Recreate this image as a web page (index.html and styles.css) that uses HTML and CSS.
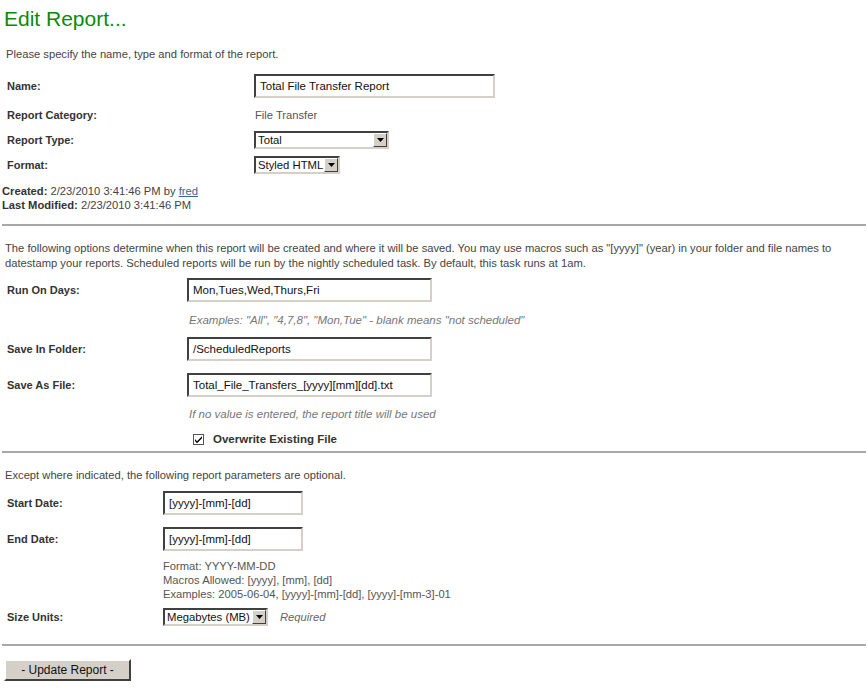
FILE: index.html
```html
<!DOCTYPE html>
<html>
<head>
<meta charset="utf-8">
<title>Edit Report</title>
<link rel="stylesheet" href="styles.css">
</head>
<body>
<div class="page">
  <h1 class="title">Edit Report...</h1>
  <p class="intro">Please specify the name, type and format of the report.</p>

  <div class="form form-a">
    <div class="label">Name:</div>
    <div class="ctl"><span class="input w-name">Total File Transfer Report</span></div>
    <div class="label">Report Category:</div>
    <div class="ctl"><span class="plain">File Transfer</span></div>
    <div class="label">Report Type:</div>
    <div class="ctl"><span class="select w-type"><span class="sel-text">Total</span><span class="sel-btn"><svg width="7" height="4" viewBox="0 0 7 4"><path d="M0 0h7L3.5 4z" fill="#000"/></svg></span></span></div>
    <div class="label">Format:</div>
    <div class="ctl"><span class="select w-format"><span class="sel-text">Styled HTML</span><span class="sel-btn"><svg width="7" height="4" viewBox="0 0 7 4"><path d="M0 0h7L3.5 4z" fill="#000"/></svg></span></span></div>
  </div>

  <div class="meta">
    <div><b>Created:</b> 2/23/2010 3:41:46 PM by <a href="#">fred</a></div>
    <div><b>Last Modified:</b> 2/23/2010 3:41:46 PM</div>
  </div>

  <hr class="rule rule-1">

  <p class="para">The following options determine when this report will be created and where it will be saved. You may use macros such as "[yyyy]" (year) in your folder and file names to datestamp your reports. Scheduled reports will be run by the nightly scheduled task. By default, this task runs at 1am.</p>

  <div class="form form-b">
    <div class="label">Run On Days:</div>
    <div class="ctl"><span class="input w-b">Mon,Tues,Wed,Thurs,Fri</span></div>
    <div></div>
    <div class="hint">Examples: "All", "4,7,8", "Mon,Tue" - blank means "not scheduled"</div>
    <div class="label">Save In Folder:</div>
    <div class="ctl"><span class="input w-b">/ScheduledReports</span></div>
    <div class="label">Save As File:</div>
    <div class="ctl"><span class="input w-b">Total_File_Transfers_[yyyy][mm][dd].txt</span></div>
    <div></div>
    <div class="hint">If no value is entered, the report title will be used</div>
    <div></div>
    <div class="check-row"><span class="checkbox"><svg width="9" height="9" viewBox="0 0 9 9"><path d="M1 4l2 2.2L8 1.2v2L3 8.2 1 6z" fill="#000"/></svg></span><b>Overwrite Existing File</b></div>
  </div>

  <hr class="rule rule-2">

  <p class="para para-c">Except where indicated, the following report parameters are optional.</p>

  <div class="form form-c">
    <div class="label">Start Date:</div>
    <div class="ctl"><span class="input w-c">[yyyy]-[mm]-[dd]</span></div>
    <div class="label">End Date:</div>
    <div class="ctl"><span class="input w-c">[yyyy]-[mm]-[dd]</span></div>
    <div></div>
    <div class="notes">Format: YYYY-MM-DD<br>Macros Allowed: [yyyy], [mm], [dd]<br>Examples: 2005-06-04, [yyyy]-[mm]-[dd], [yyyy]-[mm-3]-01</div>
    <div class="label">Size Units:</div>
    <div class="ctl"><span class="select w-size"><span class="sel-text">Megabytes (MB)</span><span class="sel-btn"><svg width="7" height="4" viewBox="0 0 7 4"><path d="M0 0h7L3.5 4z" fill="#000"/></svg></span></span><span class="req">Required</span></div>
  </div>

  <hr class="rule rule-3">

  <button class="btn" type="button">- Update Report -</button>
</div>
</body>
</html>
```
FILE: styles.css
```css
html, body {
  margin: 0;
  padding: 0;
  background: #fff;
}
body {
  font-family: "Liberation Sans", Arial, sans-serif;
  font-size: 11.2px;
  color: #444;
}
.title {
  margin: 0;
  padding: 7px 0 0 4px;
  font-size: 21px;
  font-weight: normal;
  color: #0b8a0b;
  line-height: 24px;
}
.intro {
  margin: 16px 0 0 6px;
  line-height: 14px;
}
.form {
  display: grid;
}
.label {
  font-weight: bold;
  font-size: 11px;
  color: #333;
}
.ctl {
  display: flex;
  align-items: center;
}

/* section A */
.form-a {
  grid-template-columns: 247px 1fr;
  grid-template-rows: 33px 25px 25px 25px;
  align-items: center;
  margin-top: 8px;
  padding-left: 7px;
}
.plain {
  color: #555;
  padding-left: 1px;
}
.input {
  box-sizing: border-box;
  display: inline-block;
  height: 24px;
  line-height: 20px;
  border: 2px solid #d4d0c8;
  border-top-color: #404040;
  border-left-color: #404040;
  padding: 0 4px;
  font-size: 11.5px;
  color: #111;
  background: #fff;
  white-space: nowrap;
}
.w-name { width: 241px; }
.w-b { width: 245px; }
.w-c { width: 140px; }
.select {
  box-sizing: border-box;
  display: inline-flex;
  align-items: stretch;
  height: 18px;
  border: 2px solid #d4d0c8;
  border-top-color: #404040;
  border-left-color: #404040;
  background: #fff;
  font-size: 11.3px;
  color: #111;
}
.sel-text {
  flex: 1;
  padding-left: 2px;
  line-height: 14px;
  white-space: nowrap;
  overflow: hidden;
}
.sel-btn {
  box-sizing: border-box;
  flex: none;
  width: 14px;
  background: #d4d0c8;
  border: 1px solid #fff;
  border-right-color: #404040;
  border-bottom-color: #404040;
  display: flex;
  align-items: center;
  justify-content: center;
}
.w-type { width: 135px; }
.w-format { width: 86px; }
.w-size { width: 105px; }

.meta {
  margin-top: 7px;
  padding-left: 2px;
  line-height: 14px;
}
.meta b {
  color: #333;
}
.meta a {
  color: #336699;
}
.rule {
  border: 0;
  height: 2px;
  background: #a8a8a8;
  margin: 0 2px 0 2px;
}
.rule-1 { margin-top: 12px; }
.para {
  margin: 15px 0 0 5px;
  line-height: 15px;
  padding-right: 20px;
}

/* section B */
.form-b {
  grid-template-columns: 180px 1fr;
  grid-template-rows: 24px 35px 36px 24px 34px 20px;
  padding-left: 7px;
  margin-top: 7px;
}
.form-b .label {
  line-height: 24px;
  align-self: start;
}
.form-b .ctl {
  align-self: start;
}
.hint {
  font-style: italic;
  font-size: 11.5px;
  color: #777;
  padding-left: 2px;
  align-self: center;
}
.check-row {
  display: flex;
  align-items: center;
  padding-left: 6px;
  margin-top: 1px;
  height: 14px;
  overflow: hidden;
}
.check-row b {
  color: #333;
  font-size: 11.5px;
  line-height: 14px;
}
.checkbox {
  box-sizing: border-box;
  width: 11px;
  height: 11px;
  border: 1px solid #555;
  margin-right: 9px;
  display: inline-flex;
  align-items: center;
  justify-content: center;
  background: #fff;
}
.rule-2 { margin-top: 0; }
.para-c { margin-top: 15px; }

/* section C */
.form-c {
  grid-template-columns: 156px 1fr;
  grid-template-rows: 36px 32px 45px 25px;
  padding-left: 7px;
  margin-top: 8px;
}
.form-c .label {
  line-height: 24px;
}
.form-c .ctl {
  align-self: start;
}
.form-c .label:nth-last-child(2),
.form-c .ctl:last-child {
  align-self: center;
  line-height: 14px;
}
.notes {
  line-height: 14px;
  color: #555;
}
.req {
  font-style: italic;
  color: #666;
  margin-left: 12px;
}
.rule-3 { margin-top: 15px; }
.btn {
  display: block;
  margin: 13px 0 0 4px;
  width: 127px;
  height: 22px;
  padding: 0;
  font-family: "Liberation Sans", Arial, sans-serif;
  font-size: 12px;
  color: #111;
  background: #d4d0c8;
  border: 2px solid #404040;
  border-top-color: #fff;
  border-left-color: #fff;
  border-radius: 0;
}
```
